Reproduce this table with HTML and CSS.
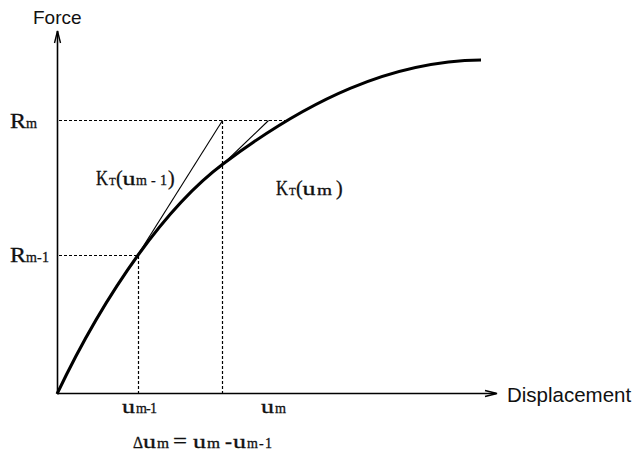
FILE: index.html
```html
<!DOCTYPE html>
<html>
<head>
<meta charset="utf-8">
<link rel="stylesheet" href="styles.css">
<title>Force-Displacement</title>
</head>
<body>
<svg class="chart" width="637" height="465" viewBox="0 0 637 465">
  <!-- axes -->
  <line class="axis" x1="57.5" y1="31" x2="57.5" y2="394"/>
  <line class="axis" x1="57" y1="393.5" x2="496" y2="393.5"/>
  <polyline class="arrow" points="54.5,43 57.5,31 60.5,43"/>
  <polyline class="arrow" points="485,390.5 497,393.5 485,396.5"/>

  <!-- dashed guides -->
  <line class="dash" x1="59" y1="120.5" x2="287" y2="120.5"/>
  <line class="dash" x1="59" y1="255.5" x2="137" y2="255.5"/>
  <line class="dash" x1="138.5" y1="256" x2="138.5" y2="393"/>
  <line class="dash" x1="222.5" y1="121" x2="222.5" y2="393"/>

  <!-- tangents -->
  <line class="tan" x1="134" y1="261" x2="222.5" y2="120.5"/>
  <line class="tan" x1="219" y1="168" x2="268.5" y2="120.5"/>

  <!-- curve -->
  <path class="curve" d="M57,394 C107,289 168,205 223,164 C308,100 391,61 481,60"/>

  <!-- labels -->
  <text class="sans" x="33" y="24" font-size="19">Force</text>
  <text class="sans" x="507" y="402" font-size="20.5">Displacement</text>

  <text class="serif" y="128"><tspan class="big" x="10" textLength="16" lengthAdjust="spacingAndGlyphs">R</tspan><tspan class="sub" x="26" textLength="11" lengthAdjust="spacingAndGlyphs">m</tspan></text>
  <text class="serif" y="262"><tspan class="big" x="10" textLength="16" lengthAdjust="spacingAndGlyphs">R</tspan><tspan class="sub" x="26" textLength="23" lengthAdjust="spacing">m-1</tspan></text>

  <text class="serif" y="185"><tspan class="mid" x="96" textLength="12" lengthAdjust="spacingAndGlyphs">K</tspan><tspan class="tiny" x="109">T</tspan><tspan class="par" x="116">(</tspan><tspan class="uu" x="122.5" textLength="13" lengthAdjust="spacingAndGlyphs">u</tspan><tspan class="sub" x="136" textLength="31" lengthAdjust="spacing">m-1</tspan><tspan class="par" x="168">)</tspan></text>
  <text class="serif" y="195"><tspan class="mid" x="276" textLength="12" lengthAdjust="spacingAndGlyphs">K</tspan><tspan class="tiny" x="289">T</tspan><tspan class="par" x="296">(</tspan><tspan class="uu" x="302.5" textLength="13" lengthAdjust="spacingAndGlyphs">u</tspan><tspan class="sub" x="317" textLength="15" lengthAdjust="spacingAndGlyphs">m</tspan><tspan class="par" x="336">)</tspan></text>

  <text class="serif" y="413"><tspan class="uu" x="122" textLength="13" lengthAdjust="spacingAndGlyphs">u</tspan><tspan class="sub" x="136" textLength="21" lengthAdjust="spacing">m-1</tspan></text>
  <text class="serif" y="413"><tspan class="uu" x="261" textLength="13" lengthAdjust="spacingAndGlyphs">u</tspan><tspan class="sub" x="275" textLength="11" lengthAdjust="spacingAndGlyphs">m</tspan></text>

  <text class="serif" y="448"><tspan class="delta" x="133" textLength="10" lengthAdjust="spacingAndGlyphs">Δ</tspan><tspan class="uu" x="143" textLength="13" lengthAdjust="spacingAndGlyphs">u</tspan><tspan class="sub" x="157" textLength="12" lengthAdjust="spacingAndGlyphs">m</tspan><tspan class="eq" x="173" textLength="14" lengthAdjust="spacingAndGlyphs">=</tspan><tspan class="uu" x="193" textLength="13" lengthAdjust="spacingAndGlyphs">u</tspan><tspan class="sub" x="207" textLength="13" lengthAdjust="spacingAndGlyphs">m</tspan><tspan class="minus" x="225" textLength="7" lengthAdjust="spacingAndGlyphs">-</tspan><tspan class="uu" x="233" textLength="13" lengthAdjust="spacingAndGlyphs">u</tspan><tspan class="sub" x="247" textLength="25" lengthAdjust="spacing">m-1</tspan></text>
</svg>
</body>
</html>
```
FILE: styles.css
```css
html, body {
  margin: 0;
  padding: 0;
  background: #ffffff;
}
.chart {
  display: block;
}
.axis {
  stroke: #000;
  stroke-width: 1.6;
  fill: none;
}
.arrow {
  stroke: #000;
  stroke-width: 1.4;
  fill: none;
  stroke-linejoin: miter;
}
.dash {
  stroke: #000;
  stroke-width: 1.2;
  stroke-dasharray: 3 2;
  fill: none;
}
.tan {
  stroke: #000;
  stroke-width: 1.1;
  fill: none;
}
.curve {
  stroke: #000;
  stroke-width: 3;
  fill: none;
  stroke-linecap: butt;
}
.sans {
  font-family: "Liberation Sans", Arial, sans-serif;
  fill: #111;
}
.serif {
  font-family: "Liberation Serif", "Times New Roman", serif;
  fill: #111;
  stroke: #111;
  stroke-width: 0.3;
}
.big {
  font-size: 20px;
}
.sub {
  font-size: 14px;
}
.mid {
  font-size: 20px;
}
.par {
  font-size: 20px;
}
.tiny {
  font-size: 11px;
}
.uu {
  font-size: 18px;
}
.delta {
  font-size: 16px;
}
.eq {
  font-size: 20px;
}
.minus {
  font-size: 18px;
  font-weight: bold;
}
```
